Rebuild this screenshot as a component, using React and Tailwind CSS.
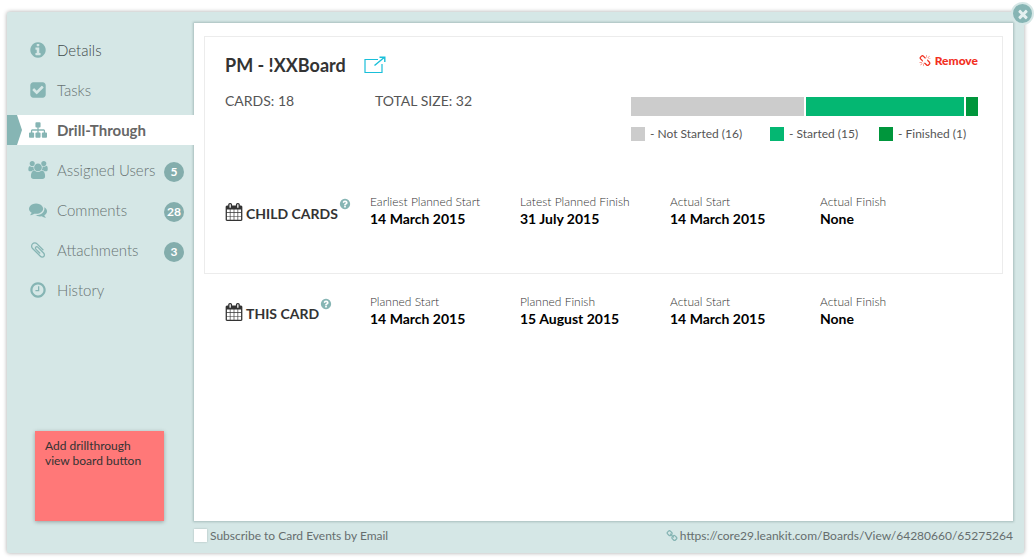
const CIRCLE = 'm640 416q0 209-103 385.5t-279.5 279.5-385.5 103-385.5-103-279.5-279.5-103-385.5 103-385.5 279.5-279.5 385.5-103 385.5 103 279.5 279.5 103 385.5z';

const PATHS = {
  info: 'M1152 1376v-160q0-14-9-23t-23-9h-96v-512q0-14-9-23t-23-9h-320q-14 0-23 9t-9 23v160q0 14 9 23t23 9h96v320h-96q-14 0-23 9t-9 23v160q0 14 9 23t23 9h448q14 0 23-9t9-23zm-128-896v-160q0-14-9-23t-23-9h-192q-14 0-23 9t-9 23v160q0 14 9 23t23 9h192q14 0 23-9t9-23z' + CIRCLE,
  check: 'M813 1299l614-614q19-19 19-45t-19-45l-102-102q-19-19-45-19t-45 19l-467 467-211-211q-19-19-45-19t-45 19l-102 102q-19 19-19 45t19 45l358 358q19 19 45 19t45-19zm851-883v960q0 119-84.5 203.5t-203.5 84.5h-960q-119 0-203.5-84.5t-84.5-203.5v-960q0-119 84.5-203.5t203.5-84.5h960q119 0 203.5 84.5t84.5 203.5z',
  sitemap: 'M1792 1248v320q0 40-28 68t-68 28h-320q-40 0-68-28t-28-68v-320q0-40 28-68t68-28h96v-192h-512v192h96q40 0 68 28t28 68v320q0 40-28 68t-68 28h-320q-40 0-68-28t-28-68v-320q0-40 28-68t68-28h96v-192h-512v192h96q40 0 68 28t28 68v320q0 40-28 68t-68 28h-320q-40 0-68-28t-28-68v-320q0-40 28-68t68-28h96v-192q0-52 38-90t90-38h512v-192h-96q-40 0-68-28t-28-68v-320q0-40 28-68t68-28h320q40 0 68 28t28 68v320q0 40-28 68t-68 28h-96v192h512q52 0 90 38t38 90v192h96q40 0 68 28t28 68z',
  users: 'M593 896q-162 5-265 128h-134q-82 0-138-40.5t-56-118.5q0-353 124-353 6 0 43.5 21t97.5 42.5 119 21.5q67 0 133-23-5 37-5 66 0 159 93 293zm1071 637q0 120-73 189.5t-194 69.5h-874q-121 0-194-69.5t-73-189.5q0-53 3.5-103.5t14-109 26.5-108.5 43-97.5 62-81 85.5-53.5 111.5-20q10 0 43 21.5t73 48 107 48 135 21.5 135-21.5 107-48 73-48 43-21.5q61 0 111.5 20t85.5 53.5 62 81 43 97.5 26.5 108.5 14 109 3.5 103.5zm-1024-1277q0 106-75 181t-181 75-181-75-75-181 75-181 181-75 181 75 75 181zm704 384q0 159-112.5 271.5t-271.5 112.5-271.5-112.5-112.5-271.5 112.5-271.5 271.5-112.5 271.5 112.5 112.5 271.5zm576 225q0 78-56 118.5t-138 40.5h-134q-103-123-265-128 93-134 93-293 0-29-5-66 66 23 133 23 59 0 119-21.5t97.5-42.5 43.5-21q124 0 124 353zm-128-609q0 106-75 181t-181 75-181-75-75-181 75-181 181-75 181 75 75 181z',
  comments: 'M1408 768q0 139-94 257t-256.5 186.5-353.5 68.5q-86 0-176-16-124 88-278 128-36 9-86 16h-3q-11 0-20.5-8t-11.5-21q-1-3-1-6.5t.5-6.5 2-6l2.5-5t3.5-5.5 4-5 4.5-5 4-4.5q5-6 23-25t26-29.5 22.5-29 25-38.5 20.5-44q-124-72-195-177t-71-224q0-139 94-257t256.5-186.5 353.5-68.5 353.5 68.5 256.5 186.5 94 257zm384 256q0 120-71 224.5t-195 176.5q10 24 20.5 44t25 38.5 22.5 29 26 29.5 23 25q1 1 4 4.5t4.5 5 4 5 3.5 5.5l2.5 5t2 6 .5 6.5-1 6.5q-3 14-13 22t-22 7q-50-7-86-16-154-40-278-128-90 16-176 16-271 0-472-132 58 4 88 4 161 0 309-45t264-129q125-92 192-212t67-254q0-77-23-152 129 71 204 178t75 230z',
  clip: 'M1596 1385q0 117-79 196t-196 79q-135 0-235-100l-777-776q-113-115-113-271 0-159 110-270t269-111q158 0 273 113l605 606q10 10 10 22 0 16-30.5 46.5t-46.5 30.5q-13 0-23-10l-606-607q-79-77-181-77-106 0-179 75t-73 181q0 105 76 181l776 777q63 63 145 63 64 0 106-42t42-106q0-82-63-145l-581-581q-26-24-60-24-29 0-48 19t-19 48q0 32 25 59l410 410q10 10 10 22 0 16-31 47t-47 31q-12 0-22-10l-410-410q-63-61-63-149 0-82 57-139t139-57q88 0 149 63l581 581q100 98 100 235z',
  clock: 'M1024 544v448q0 14-9 23t-23 9h-320q-14 0-23-9t-9-23v-64q0-14 9-23t23-9h224v-352q0-14 9-23t23-9h64q14 0 23 9t9 23zm416 352q0-148-73-273t-198-198-273-73-273 73-198 198-73 273 73 273 198 198 273 73 273-73 198-198 73-273zm224 0q0 209-103 385.5t-279.5 279.5-385.5 103-385.5-103-279.5-279.5-103-385.5 103-385.5 279.5-279.5 385.5-103 385.5 103 279.5 279.5 103 385.5z',
  calendar: 'M192 1664h288v-288h-288v288zm352 0h320v-288h-320v288zm-352-352h288v-320h-288v320zm352 0h320v-320h-320v320zm-352-384h288v-288h-288v288zm736 736h320v-288h-320v288zm-384-736h320v-288h-320v288zm768 736h288v-288h-288v288zm-384-352h320v-320h-320v320zm-352-864v-288q0-13-9.5-22.5t-22.5-9.5h-64q-13 0-22.5 9.5t-9.5 22.5v288q0 13 9.5 22.5t22.5 9.5h64q13 0 22.5-9.5t9.5-22.5zm736 864h288v-320h-288v320zm-384-384h320v-288h-320v288zm384 0h288v-288h-288v288zm32-480v-288q0-13-9.5-22.5t-22.5-9.5h-64q-13 0-22.5 9.5t-9.5 22.5v288q0 13 9.5 22.5t22.5 9.5h64q13 0 22.5-9.5t9.5-22.5zm384-64v1280q0 52-38 90t-90 38h-1408q-52 0-90-38t-38-90v-1280q0-52 38-90t90-38h128v-96q0-66 47-113t113-47h64q66 0 113 47t47 113v96h384v-96q0-66 47-113t113-47h64q66 0 113 47t47 113v96h128q52 0 90 38t38 90z',
  question: 'M1024 1376v-192q0-14-9-23t-23-9h-192q-14 0-23 9t-9 23v192q0 14 9 23t23 9h192q14 0 23-9t9-23zm256-672q0-88-55.5-163t-138.5-116-170-41q-243 0-371 213-15 24 8 42l132 100q7 6 19 6 16 0 25-12 53-68 86-92 34-24 86-24 48 0 85.5 26t37.5 59q0 38-20 61t-68 45q-63 28-115.5 86.5t-52.5 125.5v36q0 14 9 23t23 9h192q14 0 23-9t9-23q0-19 21.5-49.5t54.5-49.5q32-18 49-28.5t46-35 44.5-48 28-60.5 12.5-81zm384 192q0 209-103 385.5t-279.5 279.5-385.5 103-385.5-103-279.5-279.5-103-385.5 103-385.5 279.5-279.5 385.5-103 385.5 103 279.5 279.5 103 385.5z',
  times: 'M1490 1322q0 40-28 68l-136 136q-28 28-68 28t-68-28l-294-294-294 294q-28 28-68 28t-68-28l-136-136q-28-28-28-68t28-68l294-294-294-294q-28-28-28-68t28-68l136-136q28-28 68-28t68 28l294 294 294-294q28-28 68-28t68 28l136 136q28 28 28 68t-28 68l-294 294 294 294q28 28 28 68z',
  chain: 'M1520 1216q0-40-28-68l-208-208q-28-28-68-28-42 0-72 32 3 3 19 18.5t21.5 21.5 15 19 13 25.5 3.5 27.5q0 40-28 68t-68 28q-15 0-27.5-3.5t-25.5-13-19-15-21.5-21.5-18.5-19q-33 31-33 73 0 40 28 68l206 207q27 27 68 27 40 0 68-26l147-146q28-28 28-67zm-703-705q0-40-28-68l-206-207q-28-28-68-28-39 0-68 27l-147 146q-28 28-28 67 0 40 28 68l208 208q27 27 68 27 42 0 72-31-3-3-19-18.5t-21.5-21.5-15-19-13-25.5-3.5-27.5q0-40 28-68t68-28q15 0 27.5 3.5t25.5 13 19 15 21.5 21.5 18.5 19q33-31 33-73zm895 705q0 120-85 203l-147 146q-83 83-203 83-121 0-204-85l-206-207q-83-83-83-203 0-123 88-209l-88-88q-86 88-208 88-120 0-204-84l-208-208q-84-84-84-204t85-203l147-146q83-83 203-83 121 0 204 85l206 207q83 83 83 203 0 123-88 209l88 88q86-88 208-88 120 0 204 84l208 208q84 84 84 204z',
  unlink: 'M503 1271l-256 256q-10 9-23 9-12 0-23-9-9-10-9-23t9-23l256-256q10-9 23-9t23 9q9 10 9 23t-9 23zm169 41v320q0 14-9 23t-23 9-23-9-9-23v-320q0-14 9-23t23-9 23 9 9 23zm-224-224q0 14-9 23t-23 9h-320q-14 0-23-9t-9-23 9-23 23-9h320q14 0 23 9t9 23zm1264 128q0 120-85 203l-147 146q-83 83-203 83-121 0-204-85l-334-335q-21-21-42-56l239-18 273 274q28 28 68 27.5t68-27.5l147-146q28-28 28-67 0-40-28-68l-274-275 18-239q35 21 56 42l336 336q84 86 84 204zm-617-724l-239 18-273-274q-28-28-68-28-39 0-68 27l-147 146q-28 28-28 67 0 40 28 68l274 274-18 240q-35-21-56-42l-336-336q-84-86-84-204 0-120 85-203l147-146q83-83 203-83 121 0 204 85l334 335q21 21 42 56zm633 84q0 14-9 23t-23 9h-320q-14 0-23-9t-9-23 9-23 23-9h320q14 0 23 9t9 23zm-544-544v320q0 14-9 23t-23 9-23-9-9-23v-320q0-14 9-23t23-9 23 9 9 23zm407 151l-256 256q-11 9-23 9t-23-9q-9-10-9-23t9-23l256-256q10-9 23-9t23 9q9 10 9 23t-9 23z',
};

function Icon({ name, className, box = '0 0 1792 1792' }) {
  return (
    <svg viewBox={box} className={className} fill="currentColor" aria-hidden="true">
      <path d={PATHS[name]} />
    </svg>
  );
}

const NAV = [
  { label: 'Details', icon: 'info', tone: 'text-[#3f4a4a]' },
  { label: 'Tasks', icon: 'check' },
  { label: 'Drill-Through', icon: 'sitemap', active: true },
  { label: 'Assigned Users', icon: 'users', box: '0 0 1920 1792', count: 5 },
  { label: 'Comments', icon: 'comments', count: 28 },
  { label: 'Attachments', icon: 'clip', count: 3 },
  { label: 'History', icon: 'clock' },
];

const CHILD_DATES = [
  ['Earliest Planned Start', '14 March 2015'],
  ['Latest Planned Finish', '31 July 2015'],
  ['Actual Start', '14 March 2015'],
  ['Actual Finish', 'None'],
];

const CARD_DATES = [
  ['Planned Start', '14 March 2015'],
  ['Planned Finish', '15 August 2015'],
  ['Actual Start', '14 March 2015'],
  ['Actual Finish', 'None'],
];

function NavItem({ item }) {
  const look = item.active
    ? 'bg-white font-bold text-[#666]'
    : `font-light ${item.tone || 'text-[#687373]'}`;
  return (
    <a
      href="#"
      aria-current={item.active ? 'page' : undefined}
      className={`relative flex h-[30px] items-center pl-[21px] pr-[10px] text-[15px] ${look}`}
    >
      {item.active && (
        <svg viewBox="0 0 15 30" preserveAspectRatio="none" className="absolute inset-y-0 left-0 h-full w-[15px]" aria-hidden="true">
          <path d="M0 0H10L15 15L10 30H0Z" fill="#86b5b4" />
        </svg>
      )}
      <span className="flex w-[29px] shrink-0 justify-start text-[#86b5b4]">
        <Icon name={item.icon} box={item.box} className="h-[18px] w-5" />
      </span>
      <span className="grow whitespace-nowrap">{item.label}</span>
      {item.count !== undefined && (
        <span className="mt-[3px] flex size-5 shrink-0 items-center justify-center rounded-full bg-[#83adac] text-xs font-bold text-white">
          {item.count}
        </span>
      )}
    </a>
  );
}

function DateRow({ title, dates }) {
  return (
    <section className="grid grid-cols-[145px_150px_150px_150px_1fr]">
      <h3 className="flex items-start text-sm font-bold text-[#333]">
        <Icon name="calendar" className="mt-[9px] h-[18px] w-[18px]" />
        <span className="ml-[3px] mt-[10px] whitespace-nowrap leading-5">{title}</span>
        <button type="button" aria-label={`Help: ${title}`} className="ml-[1px] mt-1 cursor-pointer text-[#86b5b4]">
          <Icon name="question" className="size-3" />
        </button>
      </h3>
      {dates.map(([label, value]) => (
        <dl key={label} className="whitespace-nowrap">
          <dt className="text-xs font-light leading-4 text-[#333]">{label}</dt>
          <dd className="text-sm font-bold leading-[18px] text-black">{value}</dd>
        </dl>
      ))}
    </section>
  );
}

function Legend({ color, children }) {
  return (
    <li className="flex items-center gap-[5px] whitespace-nowrap text-xs leading-4 text-[#555]">
      <span className={`size-[14px] ${color}`} />
      {children}
    </li>
  );
}

export default function App() {
  return (
    <div className="flex min-h-screen bg-white pt-3 pr-[11px] pb-[7px] pl-[7px] font-['Lato',sans-serif]">
      <div className="relative flex grow rounded-[2px] bg-[#d5e7e6] shadow-[0_0_4px_rgba(0,0,0,0.35)]">
        <aside className="flex w-[187px] shrink-0 flex-col justify-between pt-[23px] pb-8">
          <nav className="flex flex-col gap-[10px]">
            {NAV.map((item) => (
              <NavItem key={item.label} item={item} />
            ))}
          </nav>
          <div className="ml-7 h-[90px] w-[129px] bg-[#ff7878] px-[10px] py-[7px] text-xs leading-[15px] text-[#333] shadow-[0_1px_4px_rgba(0,0,0,0.3)]">
            Add drillthrough
            <br />
            view board button
          </div>
        </aside>

        <div className="flex grow flex-col pt-[11px] pr-[11px]">
          <main className="grow bg-white pt-[13px] pr-[10px] pl-[10px] shadow-[0_0_2px_1px_rgba(110,140,140,0.45)]">
            <div className="border border-[#ececec] pt-4 pr-6 pb-[45px] pl-5">
              <header className="flex justify-between">
                <div>
                  <div className="flex items-center gap-[18px]">
                    <h2 className="text-lg font-bold leading-6 text-[#333]">PM - !XXBoard</h2>
                    <a href="#" aria-label="Open board">
                      <svg viewBox="0 0 22 18" className="h-[18px] w-[22px]" fill="none" stroke="#19bfd9" aria-hidden="true">
                        <path d="M14 3.5H1V16.5H18V8" strokeWidth="1.2" />
                        <path d="M10.5 9.5L20.5 1.2M15.5 1.2H20.8V6" strokeWidth="1.4" />
                      </svg>
                    </a>
                  </div>
                  <div className="mt-[14px] grid grid-cols-[150px_auto] text-sm leading-5 text-[#555]">
                    <span>CARDS: 18</span>
                    <span>TOTAL SIZE: 32</span>
                  </div>
                </div>
                <div className="flex w-[347px] flex-col">
                  <button type="button" className="flex cursor-pointer items-center gap-1 self-end text-xs font-black leading-4 text-[#f2301f]">
                    <Icon name="unlink" className="size-3" />
                    Remove
                  </button>
                  <div className="mt-7 flex h-[19px] gap-[2px]">
                    <span className="grow-[174] bg-[#cccccc]" />
                    <span className="grow-[159] bg-[#04b772]" />
                    <span className="grow-[12] bg-[#00963c]" />
                  </div>
                  <ul className="mt-[10px] grid grid-cols-[139px_109px_auto]">
                    <Legend color="bg-[#cccccc]">- Not Started (16)</Legend>
                    <Legend color="bg-[#04b772]">- Started (15)</Legend>
                    <Legend color="bg-[#00963c]">- Finished (1)</Legend>
                  </ul>
                </div>
              </header>
              <div className="mt-[52px]">
                <DateRow title="CHILD CARDS" dates={CHILD_DATES} />
              </div>
            </div>
            <div className="mt-5 pl-[21px]">
              <DateRow title="THIS CARD" dates={CARD_DATES} />
            </div>
          </main>
          <footer className="flex h-8 shrink-0 items-center justify-between pb-[3px] text-xs leading-4 text-[#666e6e]">
            <label className="flex items-center gap-[3px]">
              <input type="checkbox" className="size-[13px] appearance-none bg-white shadow-[0_0_2px_rgba(0,0,0,0.2)] checked:bg-[#86b5b4]" />
              Subscribe to Card Events by Email
            </label>
            <a href="#" className="flex items-center gap-[2px]">
              <Icon name="chain" className="size-3 text-[#86b5b4]" />
              https://core29.leankit.com/Boards/View/64280660/65275264
            </a>
          </footer>
        </div>

        <button
          type="button"
          aria-label="Close"
          className="absolute -top-[10px] -right-[10px] flex size-[23px] cursor-pointer items-center justify-center rounded-full border-2 border-[#d5e7e6] bg-[#86b5b4] text-[#e4f0f0]"
        >
          <Icon name="times" className="size-[14px]" />
        </button>
      </div>
    </div>
  );
}
